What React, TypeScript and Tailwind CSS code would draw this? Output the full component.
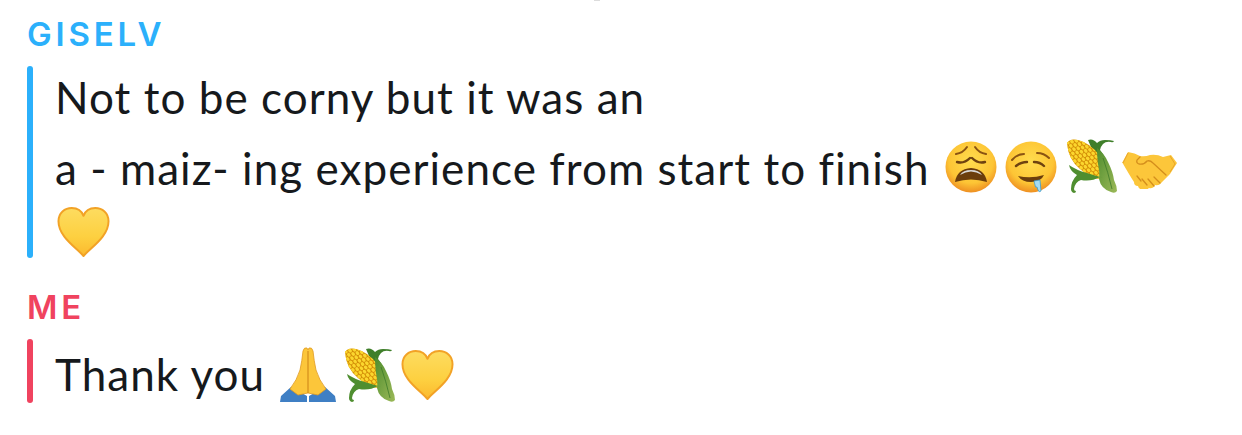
import React from 'react';

const FaceGradient = ({ id }: { id: string }) => (
  <radialGradient id={id} cx="50%" cy="38%" r="62%">
    <stop offset="0%" stopColor="#ffdc4e" />
    <stop offset="70%" stopColor="#fdc535" />
    <stop offset="100%" stopColor="#ee8f22" />
  </radialGradient>
);

const Weary = () => (
  <svg viewBox="0 0 52 52" className="w-[52px] h-[52px] shrink-0 ml-[15px] -translate-y-[1px]">
    <defs>
      <FaceGradient id="wearyFace" />
    </defs>
    <circle cx="26" cy="26" r="25.5" fill="url(#wearyFace)" />
    <path d="M11 13q7 -1 11 -7M41 13q-7 -1 -11 -7" fill="none" stroke="#8a5312" strokeWidth="2" strokeLinecap="round" />
    <path d="M12 21q7 2 13 -4M40 21q-7 2 -13 -4" fill="none" stroke="#6e4210" strokeWidth="2.4" strokeLinecap="round" />
    <path d="M10 41q2 -13 16 -14q14 1 16 14q-16 -5 -32 0z" fill="#6b3d0c" />
    <path d="M15 34q11 -7 22 0q-3 -5 -11 -5q-8 0 -11 5z" fill="#d8d8d8" />
  </svg>
);

const Drool = () => (
  <svg viewBox="0 0 52 52" className="w-[52px] h-[52px] shrink-0 ml-[8px] -translate-y-[1px]">
    <defs>
      <FaceGradient id="droolFace" />
    </defs>
    <circle cx="26" cy="26" r="25.5" fill="url(#droolFace)" />
    <path d="M7 19q5 -6 12 -6M32 12q7 0 12 5" fill="none" stroke="#8a5312" strokeWidth="2" strokeLinecap="round" />
    <path d="M11 25q5 -4 11 -4M29 21q6 0 10 4" fill="none" stroke="#6e4210" strokeWidth="2.4" strokeLinecap="round" />
    <path d="M13 35q13 3 26 -1q-3 7 -13 7q-9 0 -13 -6z" fill="#6b3d0c" />
    <path d="M29 40l6 -1l1 11q-2 2 -3 -1l-1 -3q-2 1 -2 -2z" fill="#a5dcf2" stroke="#3f9ccc" strokeWidth="0.8" />
  </svg>
);

// grid of kernels in the ear's own rotated coordinates
const kernels: { x: number; y: number }[] = [];
for (let row = 0; row < 8; row++) {
  for (let col = 0; col < 12; col++) {
    kernels.push({ x: col * 4.6 + (row % 2) * 2.3 - 3, y: (row - 3.5) * 3.7 });
  }
}

const Corn = ({ className }: { className: string }) => (
  <svg viewBox="0 0 52 56" className={`w-[52px] h-[56px] shrink-0 ${className}`}>
    <defs>
      <clipPath id="earClip">
        <path d="M1 5q3 -5 11 -3q12 3 21 15q6 9 6 24q-13 1 -25 -10q-12 -10 -13 -26z" />
      </clipPath>
      <linearGradient id="huskFront" x1="0" y1="0" x2="1" y2="1">
        <stop offset="0%" stopColor="#4e8d2e" />
        <stop offset="100%" stopColor="#9cb958" />
      </linearGradient>
    </defs>
    <path d="M22 2q5 -2 9 3q3 -3 8 -3q6 0 9 1q-1 2 -3 1q-5 -1 -8 2q-2 2 -3 6q6 8 8 16l-8 2z" fill="#3f7f2a" />
    <g clipPath="url(#earClip)">
      <rect x="0" y="0" width="44" height="44" fill="#d48f08" />
      <g transform="translate(2 2) rotate(47)">
        {kernels.map((k, i) => (
          <ellipse key={i} cx={k.x} cy={k.y} rx="2.1" ry="1.6" fill="#fbd62e" />
        ))}
      </g>
    </g>
    <path d="M31 10q7 5 11 14q5 10 6 18q3 6 3 11q-2 3 -6 1q-10 -3 -12 -13q1 -6 -1 -15q-1 -8 -1 -16z" fill="url(#huskFront)" />
    <path d="M37 20q5 14 9 31" fill="none" stroke="#3e7a2a" strokeWidth="0.8" />
    <path d="M3 27q1 6 8 10q-6 6 -6 14q0 3 3 4q2 0 2 -2q-2 0 -2 -2q1 -7 7 -9q10 2 19 -3l4 1q-8 -2 -17 -5q-11 -3 -18 -8z" fill="#4f8e30" />
  </svg>
);

const Handshake = () => (
  <svg viewBox="0 0 55 37" className="w-[55px] h-[37px] shrink-0 ml-[4px] translate-y-[2px]">
    <path d="M0 11L6 0q7 1 12 4q5 1 10 -1q7 -1 13 2l8 -2l6 8l-7 11l-9 9q-2 3 -6 2q-2 4 -6 3q-3 3 -6 1q-4 1 -5 -3q-4 0 -4 -4q-4 -6 -12 -20z" fill="#fcc63a" />
    <path d="M48 4l5 8l-5 8M6 1l-5 10" fill="none" stroke="#e9a52c" strokeWidth="1" />
    <path d="M18 5l-3 3q-1 3 2 4q5 1 8 -3q3 -1 6 2l13 12M32 25l6 6M26 27l6 7M20 27l5 6M15 24l4 5" fill="none" stroke="#d48e1c" strokeWidth="1.3" strokeLinecap="round" />
  </svg>
);

const Heart = ({ id, className }: { id: string; className?: string }) => (
  <svg viewBox="0 0 54 52" className={`w-[53px] h-[52px] shrink-0 ${className ?? ''}`}>
    <defs>
      <linearGradient id={id} x1="0" y1="0" x2="0" y2="1">
        <stop offset="0%" stopColor="#fddc60" />
        <stop offset="60%" stopColor="#fdd040" />
        <stop offset="100%" stopColor="#fbb92e" />
      </linearGradient>
    </defs>
    <path d="M27 50.5C20 42 1.5 31 1.5 15C1.5 6.5 8 1.5 15 1.5C20 1.5 25 4 27 9.5C29 4 34 1.5 39 1.5C46 1.5 52.5 6.5 52.5 15C52.5 31 34 42 27 50.5Z" fill={`url(#${id})`} stroke="#f2a226" strokeWidth="2" strokeLinejoin="round" />
  </svg>
);

const Pray = () => (
  <svg viewBox="0 0 56 55" className="w-[56px] h-[55px] shrink-0 ml-[15px]">
    <path d="M0 55l1 -6l10 -9l16 9v6zM56 55l-1 -6l-10 -9l-16 9v6z" fill="#3f7fc4" />
    <path d="M23 4q1 -4 4 -3l1 2l1 -2q3 -1 4 3q1 10 3 19q3 10 10 19l-8 6l-10 -2l-10 2l-8 -6q7 -9 10 -19q2 -9 3 -19z" fill="#fcc63a" stroke="#e09a22" strokeWidth="0.8" />
    <path d="M28 4v42" stroke="#d48e1c" strokeWidth="1.2" />
  </svg>
);

interface MessageProps {
  name: string;
  nameClass: string;
  barClass: string;
  children: React.ReactNode;
}

const Message: React.FC<MessageProps> = ({ name, nameClass, barClass, children }) => (
  <div className="flex flex-col">
    <div className={`font-['Inter',sans-serif] text-[33px] leading-[44px] font-semibold tracking-[3.8px] ${nameClass}`}>{name}</div>
    <div className="flex mt-[10px] gap-[22px]">
      <div className={`w-[6px] shrink-0 rounded-[3px] ${barClass}`} />
      <div className="flex-1 text-[44px] tracking-[1.05px] text-[#16191c]">{children}</div>
    </div>
  </div>
);

export default function App() {
  return (
    <div className="w-[1242px] h-[435px] overflow-hidden bg-white pl-[27px] font-['Lato',sans-serif] flex flex-col">
      <div className="w-[6px] h-[1px] ml-[567px] bg-[#dcdcdc] shrink-0" />
      <div className="flex flex-col gap-[27px] pt-[11px]">
        <Message name="GISELV" nameClass="text-[#2bb0fb]" barClass="bg-[#2bb0fb]">
          <div className="leading-[62px]">Not to be corny but it was an</div>
          <div className="flex items-center h-[62px] mt-[9px] leading-[62px]">
            <span>a - maiz- ing experience from start to finish</span>
            <Weary />
            <Drool />
            <Corn className="ml-[9px] -translate-y-[2px]" />
            <Handshake />
          </div>
          <div className="flex items-end h-[59px]">
            <Heart id="heartOne" className="ml-[2px]" />
          </div>
        </Message>
        <Message name="ME" nameClass="text-[#f0435f]" barClass="bg-[#f0435f]">
          <div className="flex items-center h-[64px] pt-[7px] leading-[57px]">
            <span>Thank you</span>
            <Pray />
            <Corn className="ml-[8px]" />
            <Heart id="heartTwo" className="ml-[5px]" />
          </div>
        </Message>
      </div>
    </div>
  );
}
